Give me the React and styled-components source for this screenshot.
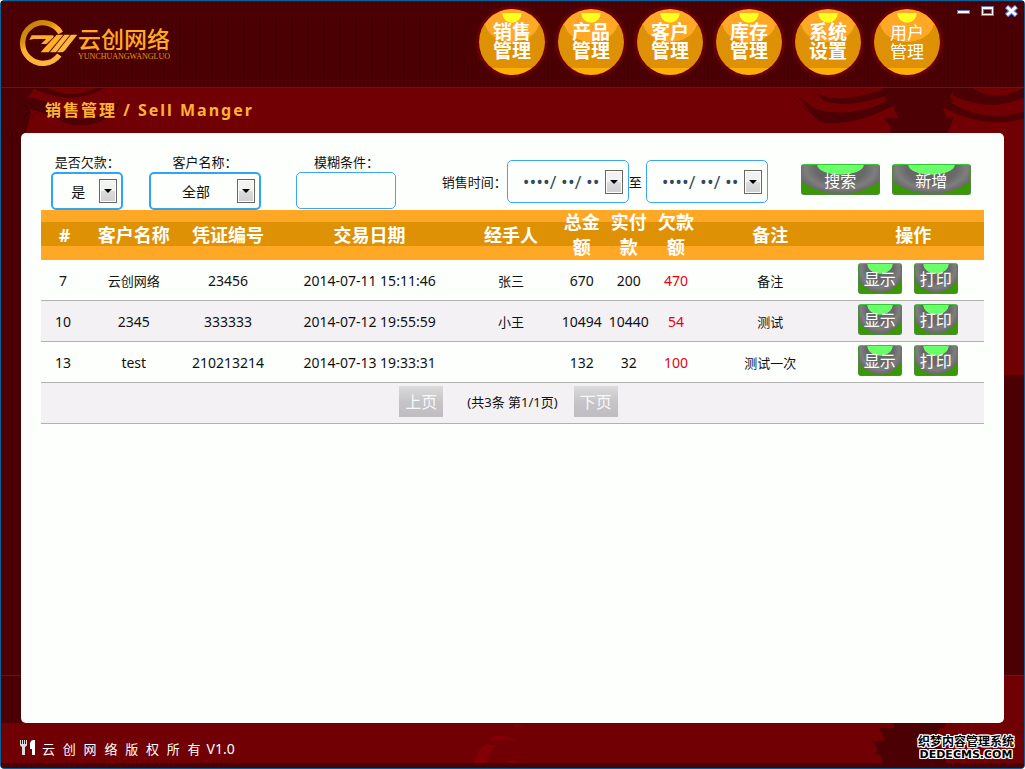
import { useState } from "react";
import styled, { createGlobalStyle } from "styled-components";

const menus = [
  { top: "销售", bottom: "管理" },
  { top: "产品", bottom: "管理" },
  { top: "客户", bottom: "管理" },
  { top: "库存", bottom: "管理" },
  { top: "系统", bottom: "设置" },
  { top: "用户", bottom: "管理", light: true },
];

const columns = [
  { title: "#", width: "5%" },
  { title: "客户名称", width: "10%" },
  { title: "凭证编号", width: "10%" },
  { title: "交易日期", width: "20%" },
  { title: "经手人", width: "10%" },
  { title: "总金额", width: "5%" },
  { title: "实付款", width: "5%" },
  { title: "欠款额", width: "5%" },
  { title: "备注", width: "15%" },
  { title: "操作", width: "15%" },
];

const orders = [
  { id: 7, customer: "云创网络", code: "23456", date: "2014-07-11 15:11:46", handler: "张三", total: 670, paid: 200, debt: 470, note: "备注" },
  { id: 10, customer: "2345", code: "333333", date: "2014-07-12 19:55:59", handler: "小王", total: 10494, paid: 10440, debt: 54, note: "测试" },
  { id: 13, customer: "test", code: "210213214", date: "2014-07-13 19:33:31", handler: "", total: 132, paid: 32, debt: 100, note: "测试一次" },
];

const Logo = () => (
  <Brand>
    <svg width="58" height="48" viewBox="60 57 174 144" aria-hidden="true">
      <defs>
        <linearGradient id="ring" x1="0" y1="0" x2="0.6" y2="1">
          <stop offset="0" stopColor="#c07c06" />
          <stop offset="0.35" stopColor="#d98f0c" />
          <stop offset="0.5" stopColor="#ffae2a" />
          <stop offset="1" stopColor="#ffb63c" />
        </linearGradient>
      </defs>
      <path d="M182 99A61 61 0 1 0 178 165" fill="none" stroke="url(#ring)" strokeWidth="16" />
      <path d="M88 120L95 106H158C162 106 162 110 159 113L139 132L123 132L138 117H100Z" fill="#ffae2a" />
      <path d="M170 104H190L146 157H122L133 144Z" fill="#ffae2a" />
      <path d="M193 104H210L168 157H150Z" fill="#ffb63c" />
      <path d="M213 104H232L201 143Q192 157 183 157H171Z" fill="#ffb63c" />
    </svg>
    <div>
      <h1>云创网络</h1>
      <p>YUNCHUANGWANGLUO</p>
    </div>
  </Brand>
);

const WindowButtons = () => (
  <Controls>
    <button aria-label="minimize">
      <svg width="13" height="12" viewBox="0 0 13 12">
        <rect x="0.5" y="5.5" width="12" height="3" fill="#fff" stroke="#5877dc" />
      </svg>
    </button>
    <button aria-label="maximize">
      <svg width="13" height="12" viewBox="0 0 13 12">
        <rect x="0.5" y="1.5" width="12" height="9" fill="#fff" stroke="#5877dc" />
        <rect x="2.5" y="4.5" width="8" height="4" fill="#4b0003" stroke="#5877dc" />
      </svg>
    </button>
    <button aria-label="close">
      <svg width="13" height="12" viewBox="0 0 13 12">
        <path d="M1.5 1.5L11.5 10.5M11.5 1.5L1.5 10.5" stroke="#5877dc" strokeWidth="5" />
        <path d="M2 2L11 10M11 2L2 10" stroke="#fff" strokeWidth="3" />
      </svg>
    </button>
  </Controls>
);

const Select = ({ id, width, children }) => (
  <SelectBox $width={width}>
    <select id={id}>{children}</select>
    <Arrow />
  </SelectBox>
);

const Arrow = () => (
  <ArrowBox>
    <svg width="8" height="4" viewBox="0 0 8 4">
      <path d="M0 0H8L4 4Z" fill="#000" />
    </svg>
  </ArrowBox>
);

const DateInput = ({ label }) => {
  const [value, setValue] = useState("••••/ ••/ ••");
  return (
    <DateBox>
      <input aria-label={label} value={value} onChange={(e) => setValue(e.target.value)} />
      <Arrow />
    </DateBox>
  );
};

const App = () => {
  const [keyword, setKeyword] = useState("");

  return (
    <Window>
      <GlobalStyle />
      <Header>
        <Logo />
        <Nav>
          {menus.map((menu) => (
            <MenuButton key={menu.top} $light={menu.light}>
              {menu.top}
              <br />
              {menu.bottom}
            </MenuButton>
          ))}
        </Nav>
        <WindowButtons />
      </Header>

      <TitleBar>
        <LeftOrnament width="130" height="45" viewBox="0 264 390 135">
          <path d="M0 264H100L75 300L90 340L75 399H0Z" />
          <path d="M95 264Q210 322 310 264H285Q210 300 140 264Z" />
          <path d="M75 292Q150 300 180 335Q250 385 340 325L360 296L345 335Q270 395 190 368Q150 340 75 325Z" />
          <path d="M66 314L86 334L66 354M92 314L114 334L92 354" fill="none" stroke="#2c0002" strokeWidth="3" />
        </LeftOrnament>
        <RightOrnament width="245" height="45" viewBox="120 264 735 135">
          <path d="M215 264Q270 325 440 266V288Q300 330 250 298Z" />
          <path d="M180 290L225 325Q330 360 450 300L462 318Q330 385 240 365L205 325Z" />
          <path d="M158 290L232 352" fill="none" stroke="#4b0003" strokeWidth="2" />
          <path d="M430 264H650L632 290L645 300L612 325L620 352H645L625 399H455V378L434 355H478L462 318L440 296Z" />
          <path d="M648 264Q740 325 855 275V264Q770 310 700 264ZM640 285Q750 340 855 292V272Q760 320 648 266Z" />
          <path d="M625 302Q740 375 855 335V355Q740 390 612 322Z" />
        </RightOrnament>
        <h2>销售管理 / Sell Manger</h2>
      </TitleBar>

      <Main>
        <Panel>
          <Filters>
            <Field>
              <label htmlFor="debt">是否欠款：</label>
              <Select id="debt" width="72px">
                <option>是</option>
                <option>否</option>
              </Select>
            </Field>
            <Field>
              <label htmlFor="customer">客户名称：</label>
              <Select id="customer" width="112px">
                <option>全部</option>
                <option>云创网络</option>
              </Select>
            </Field>
            <Field>
              <label htmlFor="keyword">模糊条件：</label>
              <TextInput id="keyword" value={keyword} onChange={(e) => setKeyword(e.target.value)} />
            </Field>
            <DateRange>
              <span>销售时间：</span>
              <DateInput label="开始时间" />
              <Until>至</Until>
              <DateInput label="结束时间" />
            </DateRange>
            <Actions>
              <Button $wide>搜索</Button>
              <Button $wide>新增</Button>
            </Actions>
          </Filters>

          <Table>
            <thead>
              <tr>
                {columns.map((col) => (
                  <Th key={col.title} $width={col.width}>{col.title}</Th>
                ))}
              </tr>
            </thead>
            <tbody>
              {orders.map((order) => (
                <tr key={order.id}>
                  <Td $number>{order.id}</Td>
                  <Td $number={order.customer !== "云创网络"}>{order.customer}</Td>
                  <Td $number>{order.code}</Td>
                  <Td $number>{order.date}</Td>
                  <Td>{order.handler}</Td>
                  <Td $number>{order.total}</Td>
                  <Td $number>{order.paid}</Td>
                  <Td $number $debt>{order.debt}</Td>
                  <Td>{order.note}</Td>
                  <Td>
                    <Actions>
                      <Button>显示</Button>
                      <Button>打印</Button>
                    </Actions>
                  </Td>
                </tr>
              ))}
            </tbody>
          </Table>

          <Pager>
            <PageButton disabled>上页</PageButton>
            <span>(共3条 第1/1页)</span>
            <PageButton disabled>下页</PageButton>
          </Pager>
        </Panel>
      </Main>

      <Footer>
        <Curl width="50" height="40" viewBox="230 69 150 120">
          <path d="M238 189Q245 145 275 132L300 138Q278 155 272 189ZM282 121Q300 92 362 121ZM338 189Q350 172 370 189ZM358 72L370 76L390 82H358Z" />
        </Curl>
        <Pillar width="77" height="40" viewBox="270 189 230 120">
          <path d="M342 189H500L495 204H485Q468 215 470 240L480 265H500V309H310L306 288L290 280L296 270L280 243H318L300 205H346Z" />
        </Pillar>
        <Copyright>
          <svg width="16" height="16" viewBox="0 0 16 16" aria-hidden="true">
            <path d="M0 0H1V4H2V0H3V4H4V0H5V4H6V0H7V5Q7 6 5 7V15H2V7Q0 6 0 5Z" fill="#ddd" />
            <path d="M15 0V15H12V9H10V3Q11 0 13 0Z" fill="#fff" />
          </svg>
          <span>云 创 网 络 版 权 所 有</span>
          <small>V1.0</small>
        </Copyright>
        <Watermark>
          <strong>织梦内容管理系统</strong>
          <em>DEDECMS.COM</em>
        </Watermark>
      </Footer>
    </Window>
  );
};

export default App;

const stripes = "repeating-linear-gradient(90deg, #4e0003 0 2px, #460003 2px 4px)";

const GlobalStyle = createGlobalStyle`
  * {
    box-sizing: border-box;
  }
  body {
    margin: 0;
    font-family: "Noto Sans", "Noto Sans CJK SC", sans-serif;
    font-size: 13px;
    color: #111;
  }
  h1, h2, p {
    margin: 0;
  }
  button, input, select {
    font-family: inherit;
  }
`;

const Window = styled.div`
  min-height: 100vh;
  display: flex;
  flex-direction: column;
  background-color: #700003;
  border: 1px solid #0a6199;
  border-radius: 4px;
`;

const Header = styled.header`
  height: 87px;
  display: flex;
  align-items: flex-start;
  padding: 7px 6px 0 19px;
  background: ${stripes};
  border-top: 1px solid #700008;
  border-bottom: 1px solid #8a0024;
`;

const Brand = styled.div`
  display: flex;
  padding-top: 10px;
  h1 {
    margin-top: 7px;
    font-size: 23px;
    font-weight: 500;
    line-height: 27px;
    color: #ffab22;
  }
  p {
    font-family: "Liberation Serif", serif;
    font-size: 8px;
    line-height: 8px;
    color: #e8960f;
  }
`;

const Nav = styled.nav`
  margin-left: auto;
  display: flex;
  gap: 13px;
`;

const MenuButton = styled.button`
  width: 66px;
  height: 66px;
  padding: 0;
  border: none;
  border-radius: 50%;
  box-shadow: 0 0 0 3px #6a0006;
  color: #fff;
  font-size: ${(p) => (p.$light ? "17px" : "19px")};
  font-weight: ${(p) => (p.$light ? 400 : 700)};
  line-height: 19px;
  cursor: pointer;
  background:
    radial-gradient(ellipse 10px 10px at 50% 0, #ffff20 92%, transparent) 0 4px no-repeat,
    radial-gradient(ellipse 27px 20px at 50% 13px, #ffa826 98%, transparent),
    linear-gradient(#ffa60c 16px, #de9105 16px 59px, #ffae05 59px);
`;

const Controls = styled.div`
  display: flex;
  gap: 11px;
  margin: -4px 0 0 17px;
  button {
    display: flex;
    padding: 0;
    border: none;
    background: none;
  }
`;

const TitleBar = styled.div`
  position: relative;
  height: 45px;
  padding-left: 44px;
  h2 {
    position: relative;
    font-size: 16px;
    line-height: 44px;
    letter-spacing: 2px;
    color: #ffb336;
  }
`;

const LeftOrnament = styled.svg`
  position: absolute;
  left: 0;
  top: 0;
  fill: #4b0003;
`;

const RightOrnament = styled.svg`
  position: absolute;
  right: 0;
  top: 0;
  fill: #4b0003;
`;

const Main = styled.main`
  flex: 1;
  display: flex;
  padding: 0 20px;
  background:
    linear-gradient(#8a0024, #8a0024) 0 92% / 100% 1px no-repeat,
    ${stripes} 0 0 / 20px 100% no-repeat,
    linear-gradient(transparent 41%, #4b0003 41% 92%, transparent 92%);
`;

const Panel = styled.section`
  flex: 1;
  padding: 20px;
  background-color: #fdfffc;
  border-radius: 5px;
`;

const Filters = styled.form`
  display: grid;
  grid-template-columns: 10% 15% 15% 40% 20%;
  align-items: center;
`;

const Field = styled.div`
  display: flex;
  flex-direction: column;
  align-items: center;
  align-self: start;
  padding-right: 2px;
  label {
    line-height: 19px;
  }
`;

const SelectBox = styled.div`
  position: relative;
  width: ${(p) => p.$width};
  select {
    width: 100%;
    height: 38px;
    padding: 0 18px 0 0;
    appearance: none;
    border: 2px solid #2fa4fb;
    border-radius: 5px;
    background: #fdfffc;
    color: #111;
    font-size: 14px;
    text-align: center;
    text-align-last: center;
  }
`;

const ArrowBox = styled.span`
  position: absolute;
  right: 6px;
  top: 50%;
  width: 18px;
  height: 24px;
  margin-top: -12px;
  display: flex;
  align-items: center;
  justify-content: center;
  border: 1px solid #66665f;
  box-shadow: inset 0 0 0 1px #fff;
  background: linear-gradient(#f2f2f2 50%, #dcdcdc 50%, #cfcfcf);
  pointer-events: none;
`;

const TextInput = styled.input`
  width: 100px;
  height: 37px;
  padding: 0 8px;
  border: 1px solid #3ba6f5;
  border-radius: 5px;
  background: #fdfffc;
  font-size: 14px;
`;

const DateRange = styled.div`
  display: flex;
  align-items: center;
  justify-content: center;
  padding-right: 4px;
`;

const Until = styled.span`
  width: 17px;
`;

const DateBox = styled.div`
  position: relative;
  input {
    width: 122px;
    height: 43px;
    padding: 0 24px 0 15px;
    border: 1px solid #3ba6f5;
    border-radius: 5px;
    background: #fdfffc;
    color: #35495c;
    font-family: "Open Sans", sans-serif;
    font-size: 18px;
  }
`;

const Actions = styled.div`
  display: flex;
  justify-content: center;
  gap: 4px;
  padding-bottom: 4px;
`;

const Button = styled.button.attrs({ type: "button" })`
  width: ${(p) => (p.$wide ? "79px" : "44px")};
  height: 31px;
  margin-right: 8px;
  padding: 0;
  border: 1px solid #4f8a3c;
  border-top-color: #35c935;
  border-radius: 3px;
  color: #fff;
  font-size: 16px;
  cursor: pointer;
  background:
    radial-gradient(ellipse 31% 34% at 50% 0, #69ff69 94%, transparent),
    radial-gradient(ellipse 58% 86% at 50% 4px, #686868 55%, #7e7e7e 78%, #6a6a6a 97%, transparent),
    linear-gradient(#5f6a5c 30%, #389902 70%);
`;

const Table = styled.table`
  width: 100%;
  table-layout: fixed;
  border-collapse: separate;
  border-spacing: 0;
  text-align: center;
  thead tr {
    background: linear-gradient(#ffa826 12px, #de9105 12px 36px, #ffa826 36px);
  }
  tbody tr:nth-child(even) {
    background-color: #f4f1f5;
  }
`;

const Th = styled.th`
  width: ${(p) => p.$width};
  height: 50px;
  padding: 0 3px 0 0;
  color: #fff;
  font-size: 18px;
  line-height: 25px;
  &:first-child,
  &:last-child {
    padding: 0;
  }
  white-space: normal;
  word-break: break-all;
`;

const Td = styled.td`
  height: 41px;
  padding: 0 3px 0 0;
  border-bottom: 1px solid #b1b1b1;
  color: ${(p) => (p.$debt ? "#e8000c" : "#111")};
  font-size: ${(p) => (p.$number ? "14px" : "13px")};
  white-space: nowrap;
`;

const Pager = styled.div`
  height: 41px;
  display: flex;
  align-items: center;
  justify-content: center;
  gap: 16px;
  padding-bottom: 4px;
  background-color: #f4f1f5;
  border-bottom: 1px solid #b1b1b1;
`;

const PageButton = styled.button`
  width: 44px;
  height: 31px;
  margin-right: 8px;
  padding: 0;
  border: none;
  background: linear-gradient(#dcdcdc, #c6c4c6 50%, #bfbdbf);
  color: #f6f8fa;
  font-size: 16px;
`;

const Footer = styled.footer`
  position: relative;
  height: 45px;
  display: flex;
  align-items: center;
  justify-content: space-between;
  padding: 0 10px 0 19px;
  border-bottom: 5px solid #4b0003;
  border-radius: 0 0 3px 3px;
`;

const Curl = styled.svg`
  position: absolute;
  left: 46%;
  top: 0;
  fill: #840006;
`;

const Pillar = styled.svg`
  position: absolute;
  right: 78px;
  top: 0;
  fill: #4b0003;
`;

const Copyright = styled.div`
  display: flex;
  align-items: center;
  gap: 6px;
  padding-top: 10px;
  color: #fff;
  span {
    font-family: "Liberation Mono", "Noto Sans CJK SC", monospace;
    font-size: 13px;
  }
  small {
    font-size: 14px;
  }
`;

const Watermark = styled.div`
  position: relative;
  display: flex;
  flex-direction: column;
  align-items: center;
  padding-top: 10px;
  color: #000;
  text-shadow: 1px 0 #fff, -1px 0 #fff, 0 1px #fff, 0 -1px #fff, 1px 1px #fff, -1px -1px #fff, 1px -1px #fff, -1px 1px #fff;
  strong {
    font-size: 12px;
    line-height: 14px;
  }
  em {
    font-family: "DejaVu Sans", sans-serif;
    font-size: 11px;
    font-style: normal;
    font-weight: 700;
    line-height: 12px;
  }
`;
